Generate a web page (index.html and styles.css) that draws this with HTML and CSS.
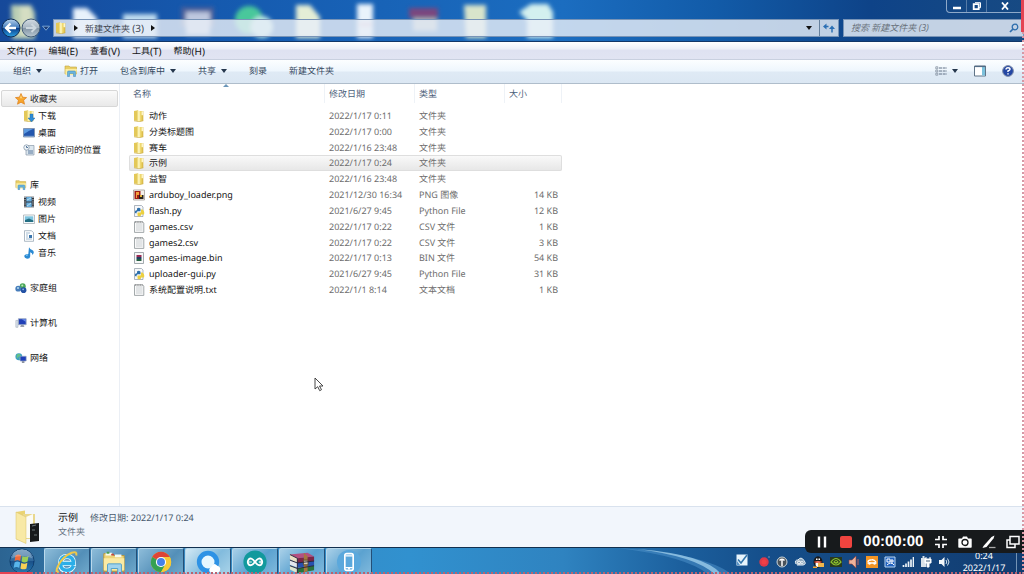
FILE: index.html
```html
<!DOCTYPE html>
<html lang="zh-CN">
<head>
<meta charset="utf-8">
<title>新建文件夹 (3)</title>
<link rel="stylesheet" href="styles.css">
</head>
<body>
<svg class="defs" aria-hidden="true">
  <defs>
    <linearGradient id="gold" x1="0" x2="1"><stop offset="0" stop-color="#f9eda0"/><stop offset=".6" stop-color="#edd568"/><stop offset="1" stop-color="#d3b03c"/></linearGradient>
    <linearGradient id="ball" x1="0" y1="0" x2="0" y2="1"><stop offset="0" stop-color="#b9d4ee"/><stop offset=".48" stop-color="#3f79bb"/><stop offset=".52" stop-color="#0b3f8c"/><stop offset="1" stop-color="#2ba3e4"/></linearGradient>
    <linearGradient id="grey" x1="0" y1="0" x2="0" y2="1"><stop offset="0" stop-color="#d5dde4"/><stop offset=".5" stop-color="#a4b4c0"/><stop offset=".52" stop-color="#8496a6"/><stop offset="1" stop-color="#b9c8d2"/></linearGradient>
    <symbol id="folder" viewBox="0 0 12 12"><path d="M1 1l4-.7v10.700l-4-.6z" fill="#e3c858"/><path d="M4.500 1h5.800v9.800l-4.300 1-1.500-.8z" fill="url(#gold)"/><path d="M5 .3l1.800 1v10.400l-1.800-.7z" fill="#fbf2b4"/><path d="M8.500 1.200h1.700v4H8.500z" fill="#fff6c4"/><path d="M1 10.800l5 1 4.300-1" stroke="#c6a63e" stroke-width=".6" fill="none"/></symbol>
    <symbol id="sheet" viewBox="0 0 12 12"><path d="M1.500.8h8l1.300 1.300v9.300H1.500z" fill="#fafafa" stroke="#8d9497" stroke-width=".8"/><path d="M3 3h6.500M3 5h6.500M3 7h6.500M3 9h6.500" stroke="#b4bcc0" stroke-width=".7"/><path d="M2 1h8" stroke="#777" stroke-dasharray="1 .7"/></symbol>
    <symbol id="py" viewBox="0 0 12 12"><path d="M1.500.5h7l1.500 1.500v9.500H1.500z" fill="#f7f8fa" stroke="#8d98a5" stroke-width=".7"/><path d="M4 3.500q2-1.500 3.500.2V6.300H4.700Q3.400 6.500 3.400 8.500L2 8Q1.500 5 4 5.200z" fill="#2d6faa"/><path d="M8 4.500h1.500q2.500 2 1.500 5H8v1q-2 1.700-3.500 0V7.500h3Q8.200 7 8 4.500z" fill="#ecd03f"/></symbol>
    <symbol id="lib" viewBox="0 0 14 12"><path d="M1 1h4l1 1h6.500V9H1z" fill="#e9cf66" stroke="#c5a53c" stroke-width=".6"/><path d="M1.500 4h11.500L12 10H1.500z" fill="#f9eda4"/><path d="M3.500 11.500V7q0-1 1-1h6q1 0 1 1v4.500H9.500V8.500H5.500v3z" fill="#67b4df" stroke="#3c83b5" stroke-width=".5"/></symbol>
    <symbol id="monitor" viewBox="0 0 14 12"><path d="M4 1h9v7H4z" fill="#2140b8" stroke="#9baac4"/><path d="M8 1.500h4.500v3z" fill="#6d90ef"/><path d="M7 8.500h3l1 2H6z" fill="#777f92"/><path d="M1 3h2.500v8H1z" fill="#dce4ed" stroke="#98a3b0" stroke-width=".6"/></symbol>
  </defs>
</svg>

<div class="window">
  <header class="glass">
    <svg class="wallpaper" viewBox="0 0 1024 42" preserveAspectRatio="xMinYMin slice" aria-hidden="true">
      <defs>
        <filter id="soft" x="-20%" y="-30%" width="140%" height="160%"><feGaussianBlur stdDeviation="2.300"/></filter>
        <linearGradient id="sky"><stop offset="0" stop-color="#16499a"/><stop offset=".2" stop-color="#1559ae"/><stop offset=".55" stop-color="#1b6dc0"/><stop offset=".7" stop-color="#125ba8"/><stop offset=".85" stop-color="#0e4388"/><stop offset="1" stop-color="#174a83"/></linearGradient>
      </defs>
      <rect width="1024" height="42" fill="url(#sky)"/>
      <g filter="url(#soft)">
        <path d="M11 5h20l4 8v26H12z" fill="#b9ceb4"/><path d="M20 6h11l2 30H20z" fill="#d5dec3"/>
        <path d="M73 8h14l10 10v20H73z" fill="#e8f2fb"/><path d="M123 14h34v24h-34z" fill="#bfdcf0"/>
        <path d="M181 7h33v20h-33z" fill="#4b609b"/><path d="M186 12h24v23h-24z" fill="#bec8df"/>
        <circle cx="249" cy="20" r="14" fill="#4ac89b"/><circle cx="262" cy="27" r="11" fill="#b7e4e1"/>
        <path d="M296 5h14l10 12v21h-24z" fill="#e4eed6"/><path d="M357 4h16v34h-16z" fill="#e9f3fb"/><path d="M359 23h13v3h-13z" fill="#dca4ba"/>
        <path d="M409 8h29v10h-29z" fill="#7a477f"/><path d="M413 18h24v13h-24z" fill="#a7b5bd"/>
        <path d="M464 5h22v33h-20z" fill="#d8e4cb"/><path d="M519 12l12-8h17l5 8v26h-26V20z" fill="#d3f0ef"/>
      </g>
    </svg>
    <div class="caption">
      <button aria-label="最小化"><svg viewBox="0 0 12 8"><path d="M2 6h8" stroke="#fff" stroke-width="2.500"/></svg></button>
      <button aria-label="还原"><svg viewBox="0 0 12 8"><path d="M4 .7h5.500v5H8" fill="none" stroke="#fff"/><path d="M2.700 2.200h5v5h-5z" fill="none" stroke="#fff" stroke-width="1.800"/></svg></button>
      <button class="close" aria-label="关闭"><svg viewBox="0 0 12 8"><path d="M3 .5l6 7M9 .5l-6 7" stroke="#fff" stroke-width="1.800"/></svg></button>
    </div>
    <div class="navbar">
      <div class="history">
        <button aria-label="后退"><svg viewBox="0 0 20 20"><circle cx="10" cy="10" r="9" fill="url(#ball)" stroke="#0d2d57"/><path d="M15 10H5.500M9.500 5.500L5 10l4.500 4.500" fill="none" stroke="#fff" stroke-width="2.300"/></svg></button>
        <button aria-label="前进"><svg viewBox="0 0 20 20"><circle cx="10" cy="10" r="9" fill="url(#grey)" stroke="#415b76"/><path d="M5 10h9M10.500 6l4 4-4 4" fill="none" stroke="#ccd7de" stroke-width="2"/></svg></button>
        <button class="recent" aria-label="最近页面"><svg viewBox="0 0 8 6"><path d="M1 1h6L4 4.500z" fill="#1b3c75" stroke="#8bb4df" stroke-width=".7"/></svg></button>
      </div>
      <div class="address">
        <svg class="i12" viewBox="0 0 12 12"><use href="#folder"/></svg>
        <i class="right"></i><span>新建文件夹 <b>(3)</b></span><i class="right"></i>
        <button class="drop" aria-label="历史地址"><i class="down dark"></i></button>
        <button class="refresh" aria-label="刷新"><svg viewBox="0 0 12 10"><path d="M0 3.500L3.500.5v6zM12 6L9 2.500 6 6z" fill="#2b6fb4"/><path d="M3 3.500h2.500M9 5v4.500" stroke="#2b6fb4" stroke-width="1.500"/></svg></button>
      </div>
      <label class="search"><input type="text" placeholder="搜索 新建文件夹 (3)" aria-label="搜索"><svg viewBox="0 0 10 10"><circle cx="6" cy="4" r="2.800" fill="none" stroke="#2e6ead" stroke-width="1.300"/><path d="M4 6L1 9" stroke="#2e6ead" stroke-width="1.700"/></svg></label>
    </div>
  </header>

  <nav class="menu" aria-label="菜单">
    <button>文件<b>(F)</b></button><button>编辑<b>(E)</b></button><button>查看<b>(V)</b></button><button>工具<b>(T)</b></button><button>帮助<b>(H)</b></button>
  </nav>

  <div class="toolbar">
    <button>组织<i class="down"></i></button>
    <button class="open"><svg viewBox="0 0 14 12"><use href="#lib"/></svg>打开</button>
    <button>包含到库中<i class="down"></i></button>
    <button>共享<i class="down"></i></button>
    <button>刻录</button>
    <button>新建文件夹</button>
    <div class="views">
      <button aria-label="更改视图"><svg viewBox="0 0 12 10"><path d="M.8.800h2v2h-2zM.8 4h2v2h-2zM.8 7.200h2v2h-2z" fill="none" stroke="#83909f" stroke-width=".8"/><path d="M4 2h8M4 5h8M4 8h8" stroke="#607086" stroke-dasharray="3 .7"/></svg><i class="down"></i></button>
      <button aria-label="预览窗格"><svg viewBox="0 0 12 11"><path d="M.5.500h11v10H.5z" fill="#fff" stroke="#607487"/><path d="M8 1.500h3v8.500H8z" fill="#7cc1dc"/><path d="M1 1h10.500" stroke="#526b86" stroke-width="1.200"/></svg></button>
      <button aria-label="帮助"><svg viewBox="0 0 12 12"><circle cx="6" cy="6" r="5.400" fill="#2447a3" stroke="#828faa"/><path d="M4 4.500Q4 2.800 6 2.800t2 1.500Q8 5.300 6 6v1M6 8.200v1.300" fill="none" stroke="#fff" stroke-width="1.500"/></svg></button>
    </div>
  </div>

  <main class="content">
    <nav class="tree" aria-label="导航窗格">
      <ul>
        <li><a class="root selected" href="#"><svg viewBox="0 0 12 12"><path d="M6 .5l1.600 3.700 4 .4-3 2.600.9 4L6 9.200l-3.500 2 .9-4-3-2.600 4-.4z" fill="#f7a52c" stroke="#dc7c19" stroke-width=".7"/><path d="M6 2l1 3 3 .3H5z" fill="#ffdc80"/></svg>收藏夹</a></li>
        <li><a href="#"><svg viewBox="0 0 12 12"><use href="#folder"/><path d="M7 4h3v4h2l-3.500 4L5 8h2z" fill="#2f8cd5" stroke="#1d64a8" stroke-width=".4"/></svg>下载</a></li>
        <li><a href="#"><svg viewBox="0 0 12 12"><path d="M.5 1.500h11v8.500H.5z" fill="#2457ae" stroke="#7d91ab" stroke-width=".8"/><path d="M1 2h9Q5 4 1 7z" fill="#5c9ae0"/><path d="M1 9.300h10" stroke="#b3cbe0" stroke-width=".7"/></svg>桌面</a></li>
        <li><a href="#"><svg viewBox="0 0 12 12"><path d="M3 1.500h8v9.500H3z" fill="#dce7ef" stroke="#8999a9" stroke-width=".7"/><circle cx="3.500" cy="3.500" r="2.700" fill="#eef4f8" stroke="#7a8ca0" stroke-width=".7"/><path d="M3.500 2v1.500H5M5 7h5M5 9h5" fill="none" stroke="#54759a"/></svg>最近访问的位置</a></li>
      </ul>
      <ul>
        <li><a class="root" href="#"><svg viewBox="0 0 14 12"><use href="#lib"/></svg>库</a></li>
        <li><a href="#"><svg viewBox="0 0 12 12"><path d="M1 .7h10v10.600H1z" fill="#30343b"/><path d="M3.300 1h5.400v4.500H3.300zM3.300 6.500h5.400V11H3.300z" fill="#68addd"/><path d="M2 1v10M10 1v10" stroke="#dde4e8" stroke-width="1.200" stroke-dasharray="1 1.200"/><path d="M4 4l4-2M4 10l4-3" stroke="#b6deef"/></svg>视频</a></li>
        <li><a href="#"><svg viewBox="0 0 12 12"><path d="M.5 2h11v8.500H.5z" fill="#fff" stroke="#9aa4aa" stroke-width=".7"/><path d="M1.800 3.300h8.500v5.800H1.800z" fill="#7ec4df"/><path d="M2 9V7l4-1.500 4.300 2V9z" fill="#236e83"/></svg>图片</a></li>
        <li><a href="#"><svg viewBox="0 0 12 12"><path d="M1.500.7h7l2 2v8.600h-9z" fill="#fff" stroke="#8d9eae" stroke-width=".7"/><path d="M3 3h4M3 5h2M3 7h2M3 9h6" stroke="#8ba9c4" stroke-width=".8"/><path d="M6 5h3v3H6z" fill="#3b76ad"/></svg>文档</a></li>
        <li><a href="#"><svg viewBox="0 0 12 12"><path d="M6 .3q1 2.500 4 3.200 1.800 2-.5 4.500 0-2-2.300-2.800v4Q7 11.800 4 11.700 1 11 1.300 8.800 2.500 6.500 5.300 7z" fill="#2b8ad3"/><path d="M3 8.500q1-1 2-.5" stroke="#93d1f5" fill="none"/></svg>音乐</a></li>
      </ul>
      <ul><li><a class="root" href="#"><svg viewBox="0 0 14 12"><circle cx="9" cy="4" r="3.500" fill="#4aa758"/><circle cx="3.800" cy="6.800" r="3.400" fill="#477dbb"/><circle cx="10" cy="8.500" r="3.300" fill="#2452a4"/><circle cx="3.500" cy="6" r="1.200" fill="#b6dcec"/><circle cx="8.500" cy="3" r="1.200" fill="#bfe8bd"/><circle cx="9.500" cy="7.500" r="1" fill="#91bdeb"/></svg>家庭组</a></li></ul>
      <ul><li><a class="root" href="#"><svg viewBox="0 0 14 12"><use href="#monitor"/></svg>计算机</a></li></ul>
      <ul><li><a class="root" href="#"><svg viewBox="0 0 14 12"><circle cx="4.500" cy="4.500" r="4" fill="#3c9fc5"/><path d="M2 2l3-1 2 2-3 2-2 2zM5 6l3-1v2L5 8z" fill="#65c187"/><path d="M6 4h7v5.500H6z" fill="#1e3fba" stroke="#93a2c1" stroke-width=".8"/><path d="M8 10h3v1.500H8z" fill="#5a657c"/></svg>网络</a></li></ul>
    </nav>

    <table class="files">
      <thead><tr><th class="sorted">名称</th><th>修改日期</th><th>类型</th><th>大小</th></tr></thead>
      <tbody>
        <tr><td><svg viewBox="0 0 12 12"><use href="#folder"/></svg>动作</td><td>2022/1/17 0:11</td><td>文件夹</td><td></td></tr>
        <tr><td><svg viewBox="0 0 12 12"><use href="#folder"/></svg>分类标题图</td><td>2022/1/17 0:00</td><td>文件夹</td><td></td></tr>
        <tr><td><svg viewBox="0 0 12 12"><use href="#folder"/></svg>赛车</td><td>2022/1/16 23:48</td><td>文件夹</td><td></td></tr>
        <tr class="selected"><td><svg viewBox="0 0 12 12"><use href="#folder"/></svg>示例</td><td>2022/1/17 0:24</td><td>文件夹</td><td></td></tr>
        <tr><td><svg viewBox="0 0 12 12"><use href="#folder"/></svg>益智</td><td>2022/1/16 23:48</td><td>文件夹</td><td></td></tr>
        <tr><td><svg viewBox="0 0 12 12"><path d="M.5 1h11v10H.5z" fill="#f5f0e9" stroke="#99938d" stroke-width=".7"/><path d="M1.500 2h6v8h-6z" fill="#a11d16"/><path d="M3 3h3v3H4v3H3z" fill="#f3a13c"/><path d="M6 6h4.500v4H6z" fill="#27231c"/><path d="M7 6h2v2H7z" fill="#e7b637"/></svg>arduboy_loader.png</td><td>2021/12/30 16:34</td><td>PNG 图像</td><td>14 KB</td></tr>
        <tr><td><svg viewBox="0 0 12 12"><use href="#py"/></svg>flash.py</td><td>2021/6/27 9:45</td><td>Python File</td><td>12 KB</td></tr>
        <tr><td><svg viewBox="0 0 12 12"><use href="#sheet"/></svg>games.csv</td><td>2022/1/17 0:22</td><td>CSV 文件</td><td>1 KB</td></tr>
        <tr><td><svg viewBox="0 0 12 12"><use href="#sheet"/></svg>games2.csv</td><td>2022/1/17 0:22</td><td>CSV 文件</td><td>3 KB</td></tr>
        <tr><td><svg viewBox="0 0 12 12"><path d="M1.500.5h9v11h-9z" fill="#f7f8f8" stroke="#8e969c" stroke-width=".8"/><path d="M3.500 3h5v2h-5z" fill="#9c2b54"/><path d="M3.500 5h5v2h-5z" fill="#243e61"/><path d="M3.500 7h5v2h-5z" fill="#245e40"/></svg>games-image.bin</td><td>2022/1/17 0:13</td><td>BIN 文件</td><td>54 KB</td></tr>
        <tr><td><svg viewBox="0 0 12 12"><use href="#py"/></svg>uploader-gui.py</td><td>2021/6/27 9:45</td><td>Python File</td><td>31 KB</td></tr>
        <tr><td><svg viewBox="0 0 12 12"><use href="#sheet"/></svg>系统配置说明.txt</td><td>2022/1/1 8:14</td><td>文本文档</td><td>1 KB</td></tr>
      </tbody>
    </table>
  </main>

  <footer class="details">
    <svg viewBox="0 0 28 34"><path d="M2 2l9-1.500v32L2 29z" fill="#ead372"/><path d="M9 4h12v25H9z" fill="#e9d88e"/><path d="M12 7l7-3v24h-7z" fill="#fbfbf6"/><path d="M16 14l9-1v18l-9 1z" fill="#17191b"/><path d="M18 16l4-1M18 20h3M20 25h3" stroke="#6c7679"/><path d="M2 2l10 5v26.500L2 29z" fill="#f8e9a5" stroke="#d9c067" stroke-width=".5"/></svg>
    <div><p><strong>示例</strong><span>修改日期: 2022/1/17 0:24</span></p><p class="kind">文件夹</p></div>
  </footer>
</div>

<div class="taskbar">
  <button class="start" aria-label="开始"><svg viewBox="0 0 28 28"><circle cx="14" cy="14" r="13" fill="url(#ball)" stroke="#103e69"/><circle cx="14" cy="14" r="12" fill="#265e87" opacity=".6"/><path d="M7 8q3-2 6 0l-1 6q-3-2-6 0z" fill="#ef6b3d"/><path d="M14.500 8.500q3 2 6.500 0l-1 6q-3 2-6.500 0z" fill="#9bce55"/><path d="M6 15.500q3-2 6 0l-1 6q-3-2-6 0z" fill="#58b5eb"/><path d="M13.300 16q3 2 6.500 0l-1 6q-3 2-6.500 0z" fill="#f7d054"/><path d="M3 11Q5 2 14 2t11 9Q14 6 3 11z" fill="#fff" opacity=".25"/></svg></button>
  <button class="app" aria-label="Internet Explorer"><svg viewBox="0 0 28 28"><path d="M21 18q-2 5-7 5-7 0-7-7.500T14 8q7 0 7 7.500H9" fill="none" stroke="#e9faff" stroke-width="5.500"/><path d="M21 18q-2 5-7 5-7 0-7-7.500T14 8q7 0 7 7.500H9" fill="none" stroke="#2baee8" stroke-width="3.800"/><path d="M5 24Q1 26 4 19 9 8 19 4q6-2 5 3" fill="none" stroke="#efc84a" stroke-width="2.200"/></svg></button>
  <button class="app" aria-label="文件资源管理器"><svg viewBox="0 0 28 28"><path d="M3 5h9l2 2h11v17H3z" fill="#edd477" stroke="#b8963e"/><path d="M5 4h7v3H5zM15 6h7v3h-7z" fill="#f5faf1"/><path d="M6 3h3v2H6z" fill="#49a152"/><path d="M11 5h3v2h-3z" fill="#c3473f"/><path d="M3 10h22v13H3z" fill="#faeaa4"/><path d="M7 27V17q0-1 1-1h13q1 0 1 1v10h-4v-6h-7v6z" fill="#a0d3ee" stroke="#4e9dc9"/></svg></button>
  <button class="app" aria-label="Chrome"><svg viewBox="0 0 28 28"><circle cx="14" cy="14" r="11" fill="#f5c92e"/><path d="M14 14L4.500 8.500A11 11 0 0 1 23.500 8.500H14z" fill="#de4436"/><path d="M4.500 8.500A11 11 0 0 0 14 25l5-8-5-3z" fill="#35a153"/><path d="M14 8.500h9.500A11 11 0 0 1 14 25l5-9z" fill="#f6ca36"/><circle cx="14" cy="14" r="5.500" fill="#fff"/><circle cx="14" cy="14" r="4.300" fill="#4681e8"/></svg></button>
  <button class="app lit" aria-label="浏览器"><svg viewBox="0 0 28 28"><circle cx="14" cy="14" r="9.500" fill="#e7f7ff" stroke="#2d92e5" stroke-width="5"/><path d="M16 25q-2-4 2-6 2-5 6-1 4 1 3 5-1 3-5 3h-4z" fill="#fff"/></svg></button>
  <button class="app mid" aria-label="Arduino"><svg viewBox="0 0 28 28"><circle cx="14" cy="14" r="12.500" fill="#12999d"/><path d="M14 14Q10 8.500 7.500 11q-2.500 3 0 6 2.500 2 6.500-3Q18 8.500 20.500 11q2.500 3 0 6-2.500 2-6.500-3z" fill="none" stroke="#fff" stroke-width="2"/><path d="M7.500 14h3M18 14h3M19.500 12.500v3" stroke="#fff"/></svg></button>
  <button class="app mid" aria-label="WinRAR"><svg viewBox="0 0 28 28"><path d="M1 6l19-2 7 4-18 2z" fill="#b44f80"/><path d="M1 6l8 4v5l-8-4z" fill="#eadfc4"/><path d="M9 10l18-2v5L9 15z" fill="#7c2546"/><path d="M1 12l8 3v5l-8-3z" fill="#e4e7ee"/><path d="M9 15l18-2v5L9 20z" fill="#2750af"/><path d="M1 18l8 3v5l-8-4z" fill="#dde5d0"/><path d="M9 21l18-3v5L9 26z" fill="#29723e"/><path d="M16 4l4 4v16l-4 1z" fill="#a5763f"/><path d="M15.500 12h5v5h-5z" fill="#d8d0bc" stroke="#57482d"/><path d="M1 6l8 4v16M1 12l8 3 18-2M1 18l8 3 18-3" fill="none" stroke="#292337"/></svg></button>
  <button class="app mid" aria-label="手机助手"><svg viewBox="0 0 28 28"><circle cx="14" cy="14" r="13" fill="#5ba8dc"/><rect x="9.500" y="5" width="9" height="18" rx="2" fill="#5ba8dc" stroke="#fff" stroke-width="1.800"/><path d="M10 7.500h8M10 20h8M13 21.500h2" stroke="#fff" stroke-width="1.300"/></svg></button>
  <svg class="flare" viewBox="0 0 370 28" preserveAspectRatio="none" aria-hidden="true"><path d="M250 0q90 6 116 28h-24Q320 9 250 0z" fill="#4f93cc" opacity=".5"/><path d="M270 1q70 6 86 27h-7Q330 9 270 1z" fill="#a9d7f1" opacity=".7"/></svg>

  <div class="tray">
    <svg class="first" viewBox="0 0 12 12"><path d="M.5.500h11v11H.5z" fill="#e8f4fc"/><path d="M11 1L5 9 2 5.500" fill="none" stroke="#3476ac" stroke-width="1.600"/><path d="M1 7l3 4H1z" fill="#5894c6"/></svg>
    <svg viewBox="0 0 12 12"><circle cx="6" cy="6" r="4.700" fill="#dd3949"/><circle cx="6" cy="6" r="2.500" fill="#f04046"/><path d="M10.500 1h1" stroke="#d2d8e4"/></svg>
    <svg viewBox="0 0 12 12"><circle cx="6" cy="6" r="5" fill="#49525a" stroke="#ced8dc"/><path d="M3.500 4.500Q6 2 8.500 4.500M6 3v7" fill="none" stroke="#fff" stroke-width="1.500"/></svg>
    <svg viewBox="0 0 12 12"><path d="M2 8Q0 4 4 4q3-4 6 .5 3 4-1 4.500H3" fill="#8fa8bd" stroke="#e4edf4"/><circle cx="5" cy="6.500" r="1.500" fill="none" stroke="#fff"/><circle cx="8" cy="6.500" r="1.200" fill="none" stroke="#fff" stroke-width=".7"/></svg>
    <svg viewBox="0 0 12 12"><ellipse cx="6" cy="6" rx="4.500" ry="5.700" fill="#19191a"/><ellipse cx="6" cy="8" rx="2.500" ry="3" fill="#fff"/><path d="M4 2.500h1.500v1.500H4zM6.500 2.500H8v1.500H6.500z" fill="#fff"/><path d="M2.500 6h7" stroke="#d84331" stroke-width="1.500"/><path d="M6 7h6v4H6z" fill="#f2b64c"/><path d="M1 10.500h4v1.500H1z" fill="#f2a32f"/></svg>
    <svg viewBox="0 0 12 12"><path d="M0 1h12v10H0z" fill="#28391e"/><path d="M1 6q5-7 10 0-5 6-10 0zM4 6q2-3 4 0-2 2-4 0z" fill="none" stroke="#8bc12f" stroke-width="1.200"/></svg>
    <svg viewBox="0 0 12 12"><path d="M1 4h3l4-4v12L4 8H1z" fill="#edb39b" stroke="#983e35" stroke-width=".6"/><path d="M10 3v6" stroke="#c26059"/></svg>
    <svg viewBox="0 0 12 12"><path d="M0 0h12v12H0z" fill="#f39524"/><path d="M2 6q0-2 3-2 3-1 5 2M1.500 7h9" fill="none" stroke="#fff" stroke-width="1.300"/><circle cx="3.500" cy="7.500" r="1.200" fill="#fff"/><circle cx="8.500" cy="7.500" r="1.200" fill="#fff"/></svg>
    <svg viewBox="0 0 12 12"><path d="M1 1h10v10H1z" fill="#2163be" stroke="#b8d5f2"/><path d="M3 3h3v3H3zM6 5h4M8 3v5M3 9q4-4 7 0" fill="none" stroke="#fff"/></svg>
    <svg viewBox="0 0 12 12"><path d="M1.500 11V9M4 11V7.500M6.500 11V5.500M9 11V3.500M11.500 11V1" stroke="#edf4f8" stroke-width="1.700"/></svg>
    <svg viewBox="0 0 12 12"><path d="M1 2h5v9H1zM2.500 0h2v2h-2" fill="#d9e2e9"/><path d="M5 3h6v4H9v4H7V7H5zM6 1v2M10 1v2" fill="#f7fafc" stroke="#fff"/><path d="M6 5h4" stroke="#46627c"/></svg>
    <svg viewBox="0 0 12 12"><path d="M1 4h2.500L6.500 1v10l-3-3H1z" fill="#f3f7fa"/><path d="M8 4q1.500 2 0 4M9.500 2.500q3 3.500 0 7" fill="none" stroke="#d4e4ef"/></svg>
    <div class="clock"><time>0:24</time><time>2022/1/17</time></div>
    <button class="peek" aria-label="显示桌面"></button>
  </div>
</div>

<div class="recorder">
  <button aria-label="暂停"><svg viewBox="0 0 14 14"><path d="M4 1.500v11M10 1.500v11" stroke="#fff" stroke-width="2.400"/></svg></button>
  <button aria-label="停止"><svg viewBox="0 0 14 14"><rect x="1" y="1" width="12" height="12" rx="2" fill="#f0443f"/></svg></button>
  <time>00:00:00</time>
  <button aria-label="缩小"><svg viewBox="0 0 14 14"><path d="M1 4.500h4V1M9 1v3.500h4M1 9.500h4V13M9 13V9.500h4" fill="none" stroke="#fff" stroke-width="1.700"/></svg></button>
  <button aria-label="截图"><svg viewBox="0 0 14 14"><path d="M1 3.500h3l1-2h4l1 2h3q.7 0 .7.800V12q0 .8-.7.800H1q-.7 0-.7-.8V4.300q0-.8.7-.8z" fill="#fff"/><circle cx="7" cy="7.500" r="3" fill="#fff" stroke="#17191a" stroke-width="1.300"/></svg></button>
  <button aria-label="画笔"><svg viewBox="0 0 14 14"><path d="M1.500 11L9.500 2l3-1.500-1 3-7 8.500-4 1z" fill="#fff"/><path d="M7 12.500h6.500" stroke="#aaa" stroke-width="1.300"/></svg></button>
  <button aria-label="窗口"><svg viewBox="0 0 14 14"><path d="M4 1.500h9v7.500H4zM3.500 5H1v7.500h8V9" fill="none" stroke="#fff" stroke-width="1.500"/></svg></button>
</div>
<svg class="cursor" viewBox="0 0 10 15" aria-hidden="true"><path d="M1 1v11l2.700-2.300 2 4 1.800-1-2-3.700H9z" fill="#fff" stroke="#333" stroke-width=".9"/></svg>
<div class="capture" aria-hidden="true"></div>
</body>
</html>
```
FILE: styles.css
```css
* { box-sizing: border-box; }
body {
  margin: 0;
  height: 100vh;
  overflow: hidden;
  display: flex;
  flex-direction: column;
  position: relative;
  background: #fff;
  color: #151515;
  font: 9px/14px "Noto Sans", "Noto Sans CJK SC", sans-serif;
  text-rendering: geometricPrecision;
}
button {
  border: 0;
  padding: 0;
  background: none;
  color: inherit;
  font: inherit;
  text-rendering: inherit;
  display: flex;
  align-items: center;
  justify-content: center;
  white-space: nowrap;
}
svg { flex: none; display: block; }
b { font-weight: 400; font-size: 10px; }
p, ul { margin: 0; padding: 0; list-style: none; }
.defs { position: absolute; width: 0; height: 0; }
.window { flex: 1; min-height: 0; display: flex; flex-direction: column; }
.down { border: 3px solid transparent; border-top: 4px solid #25374d; border-bottom: 0; margin-left: 5px; }
.right { border: 3px solid transparent; border-left: 4px solid #111; border-right: 0; }

.glass { position: relative; height: 42px; border-bottom: 1px solid #123768; }
.wallpaper { position: absolute; inset: 0; width: 100%; height: 100%; }
.caption {
  position: absolute;
  top: 0;
  right: 0;
  height: 13px;
  display: flex;
  border: 1px solid #8ea9c9;
  border-top: 0;
  border-radius: 0 0 4px 4px;
}
.caption button { width: 20px; border-right: 1px solid #567ba7; }
.caption .close { width: 36px; border: 0; }
.caption svg { width: 12px; height: 8px; }
.navbar { position: relative; padding-top: 18px; display: flex; align-items: center; }
.history { display: flex; width: 53px; padding-left: 1px; }
.history svg { width: 20px; height: 20px; }
.history .recent svg { width: 10px; height: 7px; }
.address, .search {
  height: 18px;
  display: flex;
  align-items: center;
  background: rgb(232 238 247 / 82%);
  border: 1px solid #7894b7;
}
.address { flex: 1; padding-left: 1px; gap: 7px; color: #3f4650; }
.address .i12 { width: 12px; height: 12px; }
.address .drop { margin-left: auto; }
.down.dark { margin: 0; border-top-color: #111; }
.refresh { width: 19px; height: 16px; border-left: 1px solid #65809e; }
.refresh svg { width: 12px; height: 10px; }
.search { width: 181px; margin-left: 4px; background: rgb(215 225 238 / 90%); padding: 0 4px 0 7px; }
.search input { flex: 1; min-width: 0; border: 0; padding: 0; background: none; font: italic 9px/14px "Noto Sans", "Noto Sans CJK SC", sans-serif; }
.search input::placeholder { color: #69717b; opacity: 1; }
.search svg { width: 10px; height: 10px; }

.menu {
  height: 18px;
  padding: 0 7px;
  display: flex;
  gap: 12px;
  background: linear-gradient(#fff, #edf0f8 40%, #dfe2f1 50%, #e1e4f2);
  border-bottom: 1px solid #c9d0df;
}
.toolbar {
  height: 24px;
  padding: 0 10px 2px 13px;
  display: flex;
  gap: 22px;
  color: #34485e;
  background: linear-gradient(#fcfeff, #eef6fd 48%, #dfeaf5 52%, #dbe7f3);
  border-bottom: 1px solid #afbdcb;
}
.toolbar .open svg { width: 14px; height: 12px; margin-right: 2px; }
.views { margin-left: auto; display: flex; gap: 16px; }
.views svg { width: 12px; height: 12px; }

.content { flex: 1; min-height: 0; display: flex; }
.tree { width: 120px; padding: 6px 1px; border-right: 1px solid #ebeff5; display: flex; flex-direction: column; gap: 18px; }
.tree a {
  height: 17px;
  padding-left: 21px;
  display: flex;
  align-items: center;
  gap: 3px;
  color: inherit;
  text-decoration: none;
  border: 1px solid transparent;
}
.tree .root { padding-left: 13px; }
.tree svg { width: 12px; height: 12px; }
.tree .selected { border-color: #d7d7d7; border-radius: 2px; background: linear-gradient(#fafafa, #e9e9e9); }

.files { display: block; flex: 1; padding-left: 9px; }
.files thead, .files tbody { display: block; }
.files tr { display: grid; grid-template-columns: 196px 90px 90px 57px; align-items: center; width: 433px; }
.files th { position: relative; height: 19px; padding: 0 4px; text-align: left; font-weight: 400; line-height: 19px; color: #4c607a; border-right: 1px solid #eef2f7; }
.sorted::after { content: ""; position: absolute; left: 94px; top: 0; border: 3px solid transparent; border-top: 0; border-bottom: 3px solid #6b96b9; }
.files tbody { display: grid; grid-template-rows: repeat(12, 1fr); height: 190px; margin-top: 5px; }
.files td { padding: 0 4px; height: 14px; line-height: 14px; color: #6d6d6d; white-space: nowrap; }
.files td:first-child { display: flex; align-items: center; gap: 4px; color: #151515; }
.files td:nth-child(4) { text-align: right; }
.files td svg { width: 12px; height: 12px; }
.files tbody tr { border-radius: 2px; }
.files .selected { background: linear-gradient(#fafafa, #e6e6e6); box-shadow: inset 0 0 0 1px #dedede; }

.details { height: 41px; padding: 3px 14px; display: flex; gap: 16px; background: #f2f6fc; border-top: 1px solid #d9e2ee; color: #46586c; }
.details svg { width: 28px; height: 34px; }
.details strong { margin-right: 12px; font-size: 10px; font-weight: 400; color: #111; }
.kind { color: #62717f; }

.taskbar { position: relative; height: 27px; display: flex; gap: 1px; background: linear-gradient(90deg, #2c6492, #3886bd 15%, #3191cf 40%, #2f83c0 55%, #1b5e9c 67%, #154e8a 75%, #123c70); border-top: 1px solid #12304f; }
.start { width: 43px; }
.taskbar > button svg { width: 26px; height: 26px; }
.app { width: 46px; overflow: hidden; border: 1px solid #b9d9ec; border-bottom: 0; border-right-color: #244f77; border-radius: 2px; background: linear-gradient(135deg, #8dbcd9, #538fb8 60%, #70a9cb); }
.app.lit { background: linear-gradient(135deg, #d3e9f5, #82bbdd 55%, #a9d3e9); }
.app.mid { background: linear-gradient(135deg, #a9d0e8, #5ba2d0 55%, #80b9dc); }
.flare { flex: 1; min-width: 0; height: 26px; }
.tray { display: flex; align-items: center; gap: 6px; padding-top: 2px; color: #fff; }
.tray svg { width: 12px; height: 12px; }
.tray .first { margin: 0 4px 4px 0; }
.clock { width: 50px; height: 24px; display: flex; flex-direction: column; align-items: center; margin: 0 1px 0 3px; line-height: 12px; }
.peek { width: 8px; height: 22px; border-left: 1px solid #7393b5; }

.recorder { position: absolute; right: 0; bottom: 21px; width: 219px; height: 23px; padding: 0 4px 0 10px; display: flex; align-items: center; justify-content: space-between; background: #171a1c; border-radius: 6px 0 0 6px; color: #fff; }
.recorder svg { width: 14px; height: 14px; }
.recorder time { font: bold 15px/22px "Liberation Sans", sans-serif; }
.cursor { position: absolute; left: 314px; top: 377px; width: 10px; height: 15px; }
.capture { position: absolute; inset: 0; pointer-events: none; border-right: 2px dotted #d798a5; border-bottom: 2px dotted #b9616f; }
.capture::before, .capture::after { content: ""; position: absolute; background: #e44352; }
.capture::before { top: 0; right: -2px; width: 3px; height: 32px; }
.capture::after { left: 0; bottom: -2px; width: 32px; height: 2px; }
```
